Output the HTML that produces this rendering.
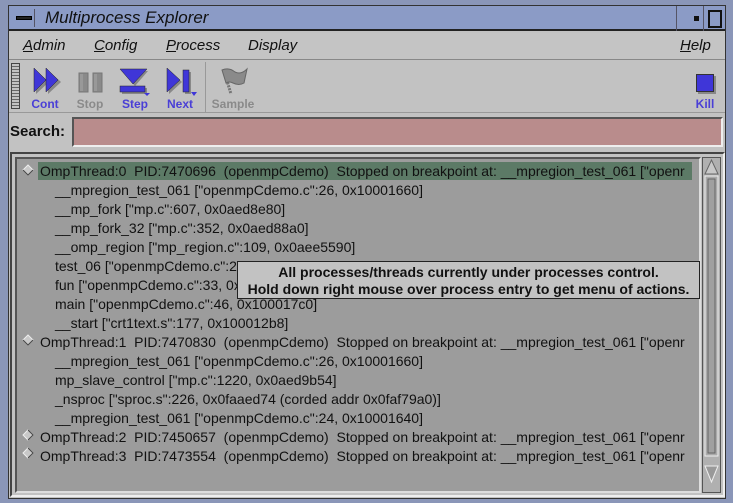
<!DOCTYPE html>
<html><head><style>
*{margin:0;padding:0;box-sizing:border-box}
body{width:733px;height:503px;overflow:hidden;background:#8a96b8;font-family:"Liberation Sans",sans-serif;position:relative}
.abs{position:absolute}
#win{left:8px;top:5px;width:718px;height:494px;background:#c2c2c2;border:1px solid #333}
#title{left:9px;top:6px;width:716px;height:25px;background:#8b9bc6;border-bottom:2px solid #222}
#title .t{left:36px;top:2px;font-size:17px;font-style:italic;color:#111}
.menu{top:37px;font-size:15px;font-style:italic;color:#111}
.menu u{text-decoration:underline}
.tb{font-size:12px;font-weight:bold;color:#4a3fd6;text-align:center;width:40px}
.row{position:absolute;left:40px;font-size:14px;color:#111;white-space:nowrap;height:18px;line-height:18px}
.sub{left:55px}
</style></head><body>
<div class="abs" id="win"></div>
<div class="abs" id="title">
 <div class="abs" style="left:4px;top:3px;width:22px;height:18px;border-right:1px solid #556"></div>
 <div class="abs" style="left:7px;top:10px;width:16px;height:4px;background:#222;border:1px solid #000"></div>
 <div class="abs t">Multiprocess Explorer</div>
 <div class="abs" style="left:667px;top:0;width:1px;height:25px;background:#556"></div>
 <div class="abs" style="left:685px;top:10px;width:5px;height:5px;background:#111"></div>
 <div class="abs" style="left:694px;top:0;width:1px;height:25px;background:#556"></div>
 <div class="abs" style="left:699px;top:4px;width:14px;height:18px;border:2px solid #111;background:#8b9bc6"></div>
</div>
<!-- menu bar -->
<div class="abs" style="left:9px;top:33px;width:716px;height:27px;background:#c4c4c4;border-bottom:1px solid #888"></div>
<div class="abs menu" style="left:23px"><u>A</u>dmin</div>
<div class="abs menu" style="left:94px"><u>C</u>onfig</div>
<div class="abs menu" style="left:166px"><u>P</u>rocess</div>
<div class="abs menu" style="left:248px">Display</div>
<div class="abs menu" style="left:680px"><u>H</u>elp</div>
<!-- toolbar -->
<div class="abs" style="left:9px;top:61px;width:716px;height:52px;background:#c2c2c2;border-bottom:1px solid #999"></div>
<div class="abs" style="left:11px;top:63px;width:9px;height:46px;border:1px solid #444;background:repeating-linear-gradient(#c2c2c2 0 2px,#666 2px 3px)"></div>
<svg class="abs" style="left:30px;top:65px" width="40" height="32">
<polygon points="6,5 19,17 6,29" fill="#888"/><polygon points="18,5 31,17 18,29" fill="#888"/>
<polygon points="4,3 16,15 4,27" fill="#3f36d8" stroke="#222" stroke-width=".5"/><polygon points="16,3 28,15 16,27" fill="#3f36d8" stroke="#222" stroke-width=".5"/></svg>
<div class="abs tb" style="left:25px;top:97px">Cont</div>
<svg class="abs" style="left:74px;top:65px" width="34" height="32"><rect x="5" y="8" width="9" height="19" fill="#8a8a8a" stroke="#777"/><rect x="19" y="8" width="9" height="19" fill="#8a8a8a" stroke="#777"/><rect x="6" y="9" width="3" height="17" fill="#999"/><rect x="20" y="9" width="3" height="17" fill="#999"/></svg>
<div class="abs tb" style="left:70px;top:97px;color:#8a8a8a">Stop</div>
<svg class="abs" style="left:117px;top:65px" width="36" height="32">
<polygon points="5,6 31,6 18,21" fill="#888"/><rect x="5" y="23" width="25" height="6" fill="#888"/>
<polygon points="3,4 30,4 16,19" fill="#3f36d8" stroke="#222" stroke-width=".5"/><rect x="3" y="21" width="25" height="6" fill="#3f36d8" stroke="#222" stroke-width=".5"/><polygon points="27,28 33,28 30,31" fill="#3f36d8"/></svg>
<div class="abs tb" style="left:115px;top:97px">Step</div>
<svg class="abs" style="left:164px;top:65px" width="36" height="32">
<polygon points="5,5 18,17 5,29" fill="#888"/><rect x="21" y="7" width="6" height="22" fill="#888"/>
<polygon points="3,3 16,15 3,27" fill="#3f36d8" stroke="#222" stroke-width=".5"/><rect x="19" y="5" width="6" height="22" fill="#3f36d8" stroke="#222" stroke-width=".5"/><polygon points="27,27 33,27 30,31" fill="#3f36d8"/></svg>
<div class="abs tb" style="left:160px;top:97px">Next</div>
<div class="abs" style="left:205px;top:62px;width:1px;height:50px;background:#999"></div>
<svg class="abs" style="left:218px;top:64px" width="34" height="32"><line x1="6" y1="7" x2="13" y2="30" stroke="#777" stroke-width="3" stroke-dasharray="2 1"/><path d="M4,6 Q11,3 17,8 Q23,11 29,5 L26,19 Q21,22 15,19 Q11,17 8,19 Z" fill="#8a8a8a" stroke="#666"/></svg>
<div class="abs tb" style="left:207px;top:97px;color:#8a8a8a;width:52px">Sample</div>
<div class="abs" style="left:696px;top:74px;width:18px;height:18px;background:#3f36d8;border:1px solid #333;box-shadow:2px 2px 0 #888"></div>
<div class="abs tb" style="left:685px;top:97px">Kill</div>
<!-- search -->
<div class="abs" style="left:10px;top:123px;font-size:15px;font-weight:bold;color:#111">Search:</div>
<div class="abs" style="left:72px;top:117px;width:651px;height:30px;background:#b98c8c;border:2px solid #555;border-right-color:#eee;border-bottom-color:#eee"></div>
<!-- list -->
<div class="abs" style="left:10px;top:152px;width:715px;height:345px;border:2px solid #444;border-right-color:#eee;border-bottom-color:#eee;background:#c2c2c2"></div>
<div class="abs" style="left:15px;top:157px;width:686px;height:336px;background:#9c9c9c;border:2px solid #555;border-right-color:#ddd;border-bottom-color:#ddd"></div>
<div class="abs" style="left:38px;top:162px;width:654px;height:18px;background:#5c7a66"></div>
<!-- scrollbar -->
<div class="abs" style="left:702px;top:157px;width:19px;height:336px;background:#b0b0b0;border:1px solid #555"></div>
<svg class="abs" style="left:703px;top:158px" width="17" height="334"><polygon points="2,16 8.5,2 15,16" fill="#c8c8c8" stroke="#666"/><rect x="2" y="18" width="13" height="280" fill="#aaa" stroke="#eee"/><rect x="5" y="21" width="7" height="274" fill="#a0a0a0" stroke="#666"/><polygon points="2,308 15,308 8.5,324" fill="#999" stroke="#eee"/></svg>
<!-- rows -->
<svg class="abs" style="left:22px;top:164px" width="14" height="300">
<g fill="#c8c8c8" stroke="#eee"><polygon points="6,1 11,6 6,11 1,6"/><polygon points="6,171 11,176 6,181 1,176"/><polygon points="6,266 11,271 6,276 1,271"/><polygon points="6,284 11,289 6,294 1,289"/></g>
<g fill="none" stroke="#444"><polyline points="11,6 6,11 1,6"/><polyline points="11,176 6,181 1,176"/><polyline points="6,266 11,271 6,276"/><polyline points="6,284 11,289 6,294"/></g></svg>
<div class="row" style="top:162px">OmpThread:0&nbsp; PID:7470696&nbsp; (openmpCdemo)&nbsp; Stopped on breakpoint at: __mpregion_test_061 ["openr</div>
<div class="row sub" style="top:181px">__mpregion_test_061 ["openmpCdemo.c":26, 0x10001660]</div>
<div class="row sub" style="top:200px">__mp_fork ["mp.c":607, 0x0aed8e80]</div>
<div class="row sub" style="top:219px">__mp_fork_32 ["mp.c":352, 0x0aed88a0]</div>
<div class="row sub" style="top:238px">__omp_region ["mp_region.c":109, 0x0aee5590]</div>
<div class="row sub" style="top:257px">test_06 ["openmpCdemo.c":26, 0x100017c0]</div>
<div class="row sub" style="top:276px">fun ["openmpCdemo.c":33, 0x100017c0]</div>
<div class="row sub" style="top:295px">main ["openmpCdemo.c":46, 0x100017c0]</div>
<div class="row sub" style="top:314px">__start ["crt1text.s":177, 0x100012b8]</div>
<div class="row" style="top:333px">OmpThread:1&nbsp; PID:7470830&nbsp; (openmpCdemo)&nbsp; Stopped on breakpoint at: __mpregion_test_061 ["openr</div>
<div class="row sub" style="top:352px">__mpregion_test_061 ["openmpCdemo.c":26, 0x10001660]</div>
<div class="row sub" style="top:371px">mp_slave_control ["mp.c":1220, 0x0aed9b54]</div>
<div class="row sub" style="top:390px">_nsproc ["sproc.s":226, 0x0faaed74 (corded addr 0x0faf79a0)]</div>
<div class="row sub" style="top:409px">__mpregion_test_061 ["openmpCdemo.c":24, 0x10001640]</div>
<div class="row" style="top:428px">OmpThread:2&nbsp; PID:7450657&nbsp; (openmpCdemo)&nbsp; Stopped on breakpoint at: __mpregion_test_061 ["openr</div>
<div class="row" style="top:447px">OmpThread:3&nbsp; PID:7473554&nbsp; (openmpCdemo)&nbsp; Stopped on breakpoint at: __mpregion_test_061 ["openr</div>
<!-- tooltip -->
<div class="abs" style="left:237px;top:261px;width:463px;height:38px;background:#c2c2c2;border:1px solid #222;font-size:14px;font-weight:bold;color:#111;line-height:17px;text-align:center;padding-top:2px;white-space:nowrap">All processes/threads currently under processes control.<br>Hold down right mouse over process entry to get menu of actions.</div>
</body></html>
